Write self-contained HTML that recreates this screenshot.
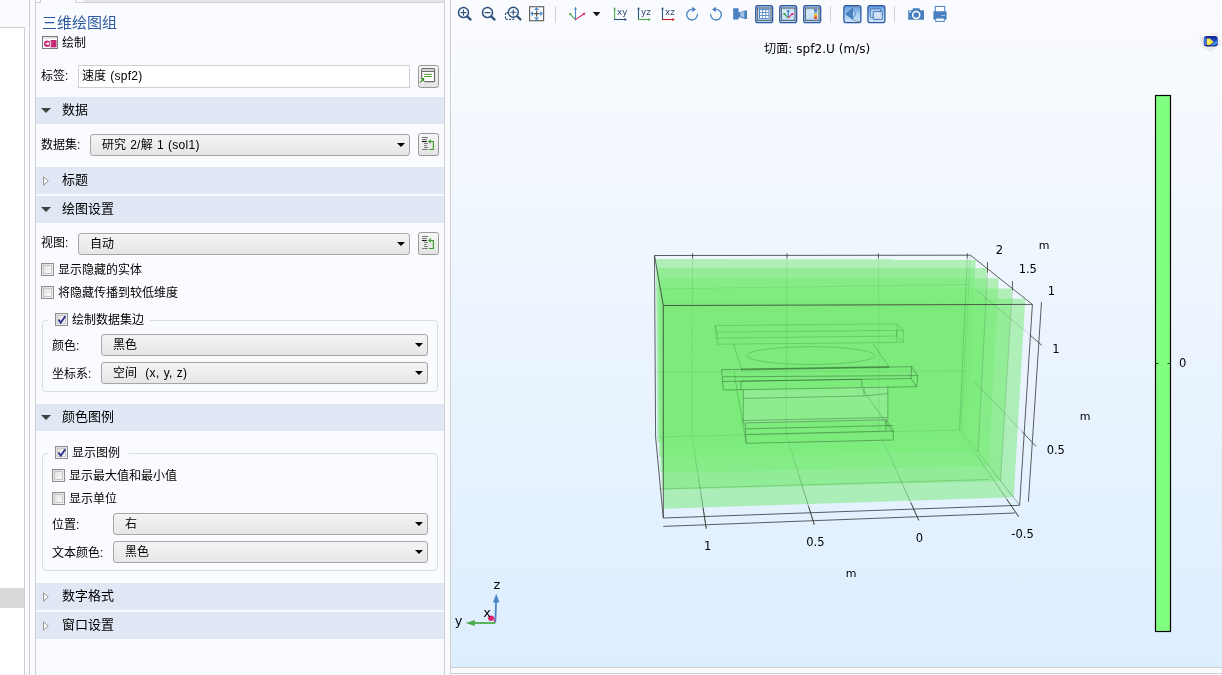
<!DOCTYPE html>
<html lang="zh-CN">
<head>
<meta charset="utf-8">
<title>三维绘图组</title>
<style>
*{box-sizing:border-box;margin:0;padding:0}
html,body{width:1222px;height:675px;overflow:hidden;background:#fafbfe}
body{position:relative;font-family:"Liberation Sans","Noto Sans CJK SC",sans-serif;font-size:12px;color:#000}
.abs{position:absolute}
.t{position:absolute;white-space:nowrap;line-height:16px;height:16px;font-size:12px;color:#000}
.hd{position:absolute;left:36px;width:408px;height:27px;background:#dfe8f4}
.hd span{position:absolute;left:26px;top:4px;font-size:13px;line-height:18px;white-space:nowrap}
.tri-d{position:absolute;left:5px;top:11px;width:0;height:0;border-left:5px solid transparent;border-right:5px solid transparent;border-top:5.500px solid #404040}
.tri-r{position:absolute;left:7px;top:8.500px;width:6px;height:10px}
.combo{position:absolute;height:22px;border:1px solid #a6a6a6;border-radius:3px;background:linear-gradient(#f4f4f4,#e6e6e6)}
.combo>span{position:absolute;top:2px;font-size:12px;line-height:16px;white-space:nowrap}
.combo i{position:absolute;right:4.500px;top:8px;width:0;height:0;border-left:4px solid transparent;border-right:4px solid transparent;border-top:4.500px solid #000}
.inp{position:absolute;border:1px solid #d0d0d0;background:#fff}
.btn{position:absolute;width:21px;height:22px;border:1px solid #999;border-radius:2.500px;background:linear-gradient(#f6f6f6,#e4e4e4)}
.cb{position:absolute;width:13px;height:13px;border:1px solid #8e8f8f;background:linear-gradient(135deg,#dcdcdc,#f6f6f6)}
.cb b{position:absolute;left:1px;top:1px;width:9px;height:9px;border:1px solid #c8c8c8;background:linear-gradient(135deg,#e2e2e2,#fbfbfb)}
.grp{position:absolute;left:42px;width:396px;border:1px solid #d8dee4;border-radius:4px}
.l{letter-spacing:.3px;word-spacing:.5px}
.gl{font-family:"DejaVu Sans","Liberation Sans",sans-serif}
</style>
</head>
<body>
<!-- far-left strip -->
<div class="abs" style="left:0;top:27px;width:25px;height:660px;background:#fff;border-top:1px solid #cfcfcf;border-right:1px solid #cfcfcf"></div>
<div class="abs" style="left:0;top:588px;width:24px;height:20px;background:#d9d9d9"></div>
<div class="abs" style="left:29px;top:0;width:1px;height:675px;background:#cfcfcf"></div>
<div class="abs" style="left:35px;top:0;width:1px;height:675px;background:#cfcfcf"></div>
<div class="abs" style="left:35px;top:0;width:6px;height:3px;border-right:1px solid #cfcfcf;border-bottom:1px solid #cfcfcf"></div>
<div class="abs" style="left:75px;top:0;width:369px;height:3px;background:#e6e6e6;border-bottom:1px solid #d2d2d2;border-left:1px solid #d2d2d2"></div>
<div class="abs" style="left:76px;top:0;width:8px;height:2px;background:#fafbfe"></div>
<div class="abs" style="left:444px;top:0;width:1px;height:675px;background:#cfcfcf"></div>
<div class="abs" style="left:450px;top:0;width:1px;height:675px;background:#cfcfcf"></div>

<!-- settings panel -->
<div id="settings" style="will-change:transform">
<div class="t" style="left:42px;top:13px;font-size:15px;line-height:20px;height:20px;color:#2d5aa0">三维绘图组</div>
<svg class="abs" style="left:42px;top:36px" width="17" height="13" viewBox="0 0 17 13"><rect x=".5" y=".5" width="15" height="12" fill="#fff" stroke="#7a7a7a"/><rect x="1" y="1" width="14" height="1.800" fill="#e4e4e4"/><rect x="8.300" y="4" width="6.200" height="7.400" fill="#c42a78"/><circle cx="5.200" cy="7.700" r="4.100" fill="#fff"/><circle cx="5.200" cy="7.700" r="3.300" fill="#c42a78"/><path d="M3.300 7.700h3.200M5.500 6.200l1.500 1.500-1.500 1.500" stroke="#fff" stroke-width="1.100" fill="none"/></svg>
<div class="t" style="left:62px;top:35px">绘制</div>

<div class="t" style="left:41px;top:68px">标签:</div>
<div class="inp" style="left:78px;top:65px;width:332px;height:23px"><span class="t" style="left:3px;top:2px">速度<span class="l"> (spf2)</span></span></div>
<div class="btn" style="left:418px;top:65px;height:23px"></div><svg class="abs" style="left:418px;top:65px" width="21" height="23" viewBox="418 65 21 23"><rect x="421.700" y="68.700" width="12.800" height="13" rx="1" fill="#fff" stroke="#6e6e6e" stroke-width="1.200"/><rect x="422.300" y="69.300" width="11.600" height="1.900" fill="#d4d4d4"/><path d="M421.700 71.500h12.800" stroke="#6e6e6e" stroke-width="1"/><path d="M424.100 74.400h7.800M424.100 76.500h7.800" stroke="#4a9a2a" stroke-width="1"/><rect x="419.800" y="78" width="4.600" height="5.500" fill="#efefef"/><path d="M420.300 78h3.900v3.900l-1.300-1.300-2.200 2.500-1-.9 2.200-2.500z" fill="#3f932c"/></svg>

<div class="hd" style="top:97px"><i class="tri-d"></i><span>数据</span></div>
<div class="t" style="left:41px;top:137px">数据集:</div>
<div class="combo" style="left:90px;top:134px;width:320px"><span style="left:11px">研究<span class="l"> 2/</span>解<span class="l"> 1 (sol1)</span></span><i></i></div>
<div class="btn" style="left:418px;top:133px;height:23px"></div><svg class="abs" style="left:418px;top:133px" width="21" height="23" viewBox="418 133 21 23"><path d="M422.100 137.5h5.800M422.100 139.5h4.700M424.100 143.5h3.800M424.100 145.5h2.700M424.100 147.5h3.800M422.100 149.5h5.800" stroke="#777" stroke-width="1"/><path d="M421.900 141.5h4.900" stroke="#111" stroke-width="1.100"/><path d="M429 149.5h4.400V141.5h-3" stroke="#3f9a32" stroke-width="1.200" fill="none"/><path d="M428 141.5l2.900-2.400v4.800z" fill="#3f9a32"/></svg>

<div class="hd" style="top:167px"><svg class="tri-r" viewBox="0 0 6 10"><path d="M.5.8v8.4L5.3 5z" fill="#fff" stroke="#8a8a8a" stroke-width=".9"/></svg><span>标题</span></div>
<div class="hd" style="top:196px"><i class="tri-d"></i><span>绘图设置</span></div>

<div class="t" style="left:41px;top:235px">视图:</div>
<div class="combo" style="left:78px;top:233px;width:332px"><span style="left:11px">自动</span><i></i></div>
<div class="btn" style="left:418px;top:232px;height:23px"></div><svg class="abs" style="left:418px;top:232px" width="21" height="23" viewBox="418 232 21 23"><path d="M422.100 236.5h5.800M422.100 238.5h4.700M424.100 242.5h3.800M424.100 244.5h2.700M424.100 246.5h3.800M422.100 248.5h5.800" stroke="#777" stroke-width="1"/><path d="M421.900 240.5h4.900" stroke="#111" stroke-width="1.100"/><path d="M429 248.5h4.400V240.5h-3" stroke="#3f9a32" stroke-width="1.200" fill="none"/><path d="M428 240.5l2.900-2.400v4.800z" fill="#3f9a32"/></svg>

<div class="cb" style="left:41px;top:263px"><b></b></div>
<div class="t" style="left:58px;top:262px">显示隐藏的实体</div>
<div class="cb" style="left:41px;top:286px"><b></b></div>
<div class="t" style="left:58px;top:285px">将隐藏传播到较低维度</div>

<div class="grp" style="top:320px;height:72px"></div>
<div class="abs" style="left:48px;top:312px;width:102px;height:16px;background:#fafbfe"></div>
<div class="cb chk" style="left:55px;top:313px"><b></b><svg class="abs" style="left:1px;top:1px" width="10" height="10" viewBox="0 0 10 10"><path d="M1.5 4.5l2.2 3.2L8.3 1.2" stroke="#2b2f8c" stroke-width="1.9" fill="none"/></svg></div>
<div class="t" style="left:72px;top:312px">绘制数据集边</div>
<div class="t" style="left:52px;top:338px">颜色:</div>
<div class="combo" style="left:101px;top:334px;width:327px"><span style="left:11px">黑色</span><i></i></div>
<div class="t" style="left:52px;top:366px">坐标系:</div>
<div class="combo" style="left:101px;top:362px;width:327px"><span style="left:11px">空间<span class="l">&nbsp; (x, y, z)</span></span><i></i></div>

<div class="hd" style="top:404px"><i class="tri-d"></i><span>颜色图例</span></div>

<div class="grp" style="top:453px;height:118px"></div>
<div class="abs" style="left:48px;top:445px;width:81px;height:16px;background:#fafbfe"></div>
<div class="cb chk" style="left:55px;top:446px"><b></b><svg class="abs" style="left:1px;top:1px" width="10" height="10" viewBox="0 0 10 10"><path d="M1.5 4.5l2.2 3.2L8.3 1.2" stroke="#2b2f8c" stroke-width="1.9" fill="none"/></svg></div>
<div class="t" style="left:72px;top:445px">显示图例</div>
<div class="cb" style="left:52px;top:469px"><b></b></div>
<div class="t" style="left:69px;top:468px">显示最大值和最小值</div>
<div class="cb" style="left:52px;top:492px"><b></b></div>
<div class="t" style="left:69px;top:491px">显示单位</div>
<div class="t" style="left:52px;top:517px">位置:</div>
<div class="combo" style="left:113px;top:513px;width:315px"><span style="left:11px">右</span><i></i></div>
<div class="t" style="left:52px;top:545px">文本颜色:</div>
<div class="combo" style="left:113px;top:541px;width:315px"><span style="left:11px">黑色</span><i></i></div>

<div class="hd" style="top:583px"><svg class="tri-r" viewBox="0 0 6 10"><path d="M.5.8v8.4L5.3 5z" fill="#fff" stroke="#8a8a8a" stroke-width=".9"/></svg><span>数字格式</span></div>
<div class="hd" style="top:612px"><svg class="tri-r" viewBox="0 0 6 10"><path d="M.5.8v8.4L5.3 5z" fill="#fff" stroke="#8a8a8a" stroke-width=".9"/></svg><span>窗口设置</span></div>
</div>

<!-- graphics window -->
<div id="gfx" class="abs" style="left:451px;top:0;width:771px;height:668px;background:linear-gradient(#fafbfe 0%,#ddeeff 100%);border-bottom:1px solid #cfcfcf"></div>
<div class="abs" style="left:451px;top:673px;width:771px;height:1px;background:#cfcfcf"></div>
<svg class="abs" style="left:0;top:0;will-change:transform" width="1222" height="30" viewBox="0 0 1222 30">
<defs>
<linearGradient id="bg1" x1="0" y1="0" x2="0" y2="1"><stop offset="0" stop-color="#9cc6ee"/><stop offset=".35" stop-color="#d6ebfc"/><stop offset="1" stop-color="#b6dbf8"/></linearGradient>
<linearGradient id="cbar" x1="0" y1="0" x2="0" y2="1"><stop offset="0" stop-color="#3060c0"/><stop offset=".35" stop-color="#80b0e0"/><stop offset=".55" stop-color="#f0d020"/><stop offset=".75" stop-color="#f08020"/><stop offset="1" stop-color="#e02050"/></linearGradient>
<linearGradient id="bg2" x1="0" y1="0" x2="0" y2="1"><stop offset="0" stop-color="#5f98dc"/><stop offset=".5" stop-color="#a6cef2"/><stop offset="1" stop-color="#cde5fa"/></linearGradient>
</defs>
<!-- zoom in -->
<g fill="none" stroke="#2b507c" stroke-linecap="round">
<circle cx="463.5" cy="12.6" r="5" stroke-width="1.5"/><path d="M467.4 16.6L470.6 19.6" stroke-width="2.2"/><path d="M461 12.6h5M463.5 10.1v5" stroke-width="1.1"/>
<circle cx="487.5" cy="12.6" r="5" stroke-width="1.5"/><path d="M491.4 16.6L494.6 19.6" stroke-width="2.2"/><path d="M485 12.6h5" stroke-width="1.1"/>
<circle cx="513.3" cy="12.3" r="5" stroke-width="1.5"/><path d="M517.2 16.3L520.4 19.4" stroke-width="2.2"/><path d="M510.8 12.3h5M513.3 9.8v5" stroke-width="1.1"/>
<path d="M508.3 12.6H505.5V19.4H513.6V17.4" stroke-width="1.2" stroke-dasharray="2 1.3" stroke-linecap="butt"/>
</g>
<!-- zoom extents -->
<rect x="529.6" y="6.7" width="14" height="14" fill="#fdfdff" stroke="#666" stroke-width="1.2"/>
<path d="M533.4 13.6h6.400M536.6 10.400v6.400" stroke="#555" stroke-width="1.300"/>
<path d="M536.6 7l2.500 3h-5zM536.6 20.400l2.500-3h-5zM530.200 13.600l2.800-2.700v5.400zM543 13.600l-2.800-2.700v5.400z" fill="#4a90d6"/>
<!-- separators -->
<path d="M555.5 6v17M830.5 6v17M894.5 6v17" stroke="#d2d2d2" stroke-width="1"/>
<!-- triad -->
<g stroke-width="1.100" fill="none" stroke-linecap="round">
<path d="M575.5 19.600V8.400" stroke="#4a86c8"/><path d="M575.5 19.600L570.200 14.200" stroke="#4aaa4a"/><path d="M575.5 19.600L584 13.800" stroke="#e0206a"/>
</g>
<path d="M575.5 6.800l1.500 2.600h-3z" fill="#4a86c8"/><path d="M569 13l2.800.5-2.200 2.200z" fill="#4aaa4a"/><path d="M585.400 12.800l-1.200 2.700-1.700-2.400z" fill="#e0206a"/>
<path d="M592.8 12h7.6l-3.8 4.2z" fill="#111"/>
<!-- xy yz xz -->
<path d="M614.6 19.500V8.600" stroke="#4aaa4a" stroke-width="1.100"/><path d="M614.6 6.900l1.400 2.500h-2.800z" fill="#4aaa4a"/><path d="M614.1 19.500h11" stroke="#2b507c" stroke-width="1.100"/><path d="M627.0 19.500l-2.500 1.400v-2.800z" fill="#2b507c"/>
<path d="M638.5 19.500V8.600" stroke="#2b507c" stroke-width="1.100"/><path d="M638.5 6.900l1.400 2.500h-2.800z" fill="#2b507c"/><path d="M638.0 19.500h11" stroke="#4aaa4a" stroke-width="1.100"/><path d="M650.9 19.500l-2.500 1.400v-2.800z" fill="#4aaa4a"/>
<path d="M662.5 19.500V8.600" stroke="#2b507c" stroke-width="1.100"/><path d="M662.5 6.900l1.400 2.500h-2.800z" fill="#2b507c"/><path d="M662.0 19.500h11" stroke="#c4202c" stroke-width="1.100"/><path d="M674.9 19.500l-2.500 1.400v-2.800z" fill="#c4202c"/>
<g font-family="'DejaVu Sans','Liberation Sans',sans-serif" font-size="8.800" fill="#2f4d72">
<text x="617" y="14.900">xy</text><text x="641" y="14.900">yz</text><text x="665" y="14.600">xz</text>
</g>
<!-- rotate cw / ccw -->
<g fill="none" stroke="#4a80c0" stroke-width="1.300">
<path d="M697.300 13.800A5.300 5.300 0 1 1 692.300 9.400"/>
<path d="M710.800 13.800A5.300 5.300 0 1 0 715.800 9.400"/>
</g>
<path d="M692.200 6.800l3.900 2.650-3.900 2.650z" fill="#4a80c0"/>
<path d="M715.900 6.800l-3.900 2.650 3.900 2.650z" fill="#4a80c0"/>
<!-- view camera -->
<path d="M733.200 8.200h5.400v4.300l6.200-2.100h2.200v8.600h-2.200l-6.200-2.100v2.700h-5.400z" fill="#4a80c0"/>
<path d="M740.300 12.600l4-1.300v6.600l-4-1.300z" fill="#a4c0e4"/>
<!-- toggle buttons -->
<g>
<rect x="755.700" y="5.700" width="17" height="17" rx="2.200" fill="url(#bg1)" stroke="#2a55a0" stroke-width="1.250"/>
<rect x="757.400" y="8" width="13.600" height="12.400" fill="none" stroke="#606468" stroke-width="1.100"/>
<rect x="759" y="9.200" width="10.400" height="9.600" fill="#4a80c0"/>
<g fill="#fff"><rect x="760" y="10.100" width="2.300" height="2.100"/><rect x="763.100" y="10.100" width="2.300" height="2.100"/><rect x="766.200" y="10.100" width="2.300" height="2.100"/><rect x="760" y="13" width="2.300" height="2.100"/><rect x="763.100" y="13" width="2.300" height="2.100"/><rect x="766.200" y="13" width="2.300" height="2.100"/><rect x="760" y="15.900" width="2.300" height="2.100"/><rect x="763.100" y="15.900" width="2.300" height="2.100"/><rect x="766.200" y="15.900" width="2.300" height="2.100"/></g>

<rect x="779.700" y="5.700" width="17" height="17" rx="2.200" fill="url(#bg1)" stroke="#2a55a0" stroke-width="1.250"/>
<rect x="781.400" y="8" width="13.600" height="12.400" fill="none" stroke="#606468" stroke-width="1.100"/>
<path d="M788.200 17.800V10.400" stroke="#3a70b8" stroke-width="1.100"/><path d="M787 11.800l1.200-1.800 1.200 1.800" stroke="#3a70b8" stroke-width="1" fill="none"/>
<path d="M788.200 17.800l-3.600-3.600" stroke="#3aa03a" stroke-width="1.100"/><rect x="783.400" y="13" width="2" height="2" fill="#3aa03a"/>
<path d="M788.200 17.800l4-3.600" stroke="#e0206a" stroke-width="1.100"/><rect x="791.400" y="13" width="2" height="2" fill="#e0206a"/>

<rect x="803.700" y="5.700" width="17" height="17" rx="2.200" fill="url(#bg1)" stroke="#2a55a0" stroke-width="1.250"/>
<rect x="805.400" y="8" width="13.600" height="12.400" fill="none" stroke="#606468" stroke-width="1.100"/>
<rect x="814.100" y="9.100" width="2.900" height="9.800" fill="url(#cbar)"/>

<rect x="843.900" y="5.700" width="17" height="17" rx="2.200" fill="url(#bg2)" stroke="#2a55a0" stroke-width="1.250"/>
<path d="M853.200 7.400L860 5.900M853.200 20L860 22" stroke="#8a8a8a" stroke-width=".8"/>
<path d="M845 13.900L853.300 7.300V20.300z" fill="#4a80c0"/>
<path d="M853.300 10.800a3.400 3.400 0 0 1 0 6.200" fill="#d0e6fa" stroke="#4a80c0" stroke-width="1"/>

<rect x="867.900" y="5.700" width="17" height="17" rx="2.200" fill="url(#bg2)" stroke="#2a55a0" stroke-width="1.250"/>
<rect x="870.300" y="8.800" width="10.400" height="8.600" rx=".8" fill="#c4ddf4" fill-opacity=".6" stroke="#4a78b8" stroke-width="1"/>
<rect x="873.200" y="11.600" width="9.200" height="7.800" rx=".6" fill="#d8e4f4" fill-opacity=".85" stroke="#4a78b8" stroke-width="1"/>
</g>
<!-- camera -->
<path d="M908.200 10.200h4l.8-2h6.400l.8 2h3.800v9.600h-15.800z" fill="#4a80c0"/>
<circle cx="916.200" cy="14.900" r="3.500" fill="#4a80c0" stroke="#fff" stroke-width="1.500"/>
<rect x="909.300" y="10.900" width="1.600" height="1.600" fill="#fff"/>
<!-- printer -->
<rect x="935.300" y="6.400" width="9.400" height="6" fill="#fdfdff" stroke="#4a80c0" stroke-width="1"/>
<path d="M933.400 12.200a1 1 0 0 1 1-1h11.200a1 1 0 0 1 1 1v7.200h-13.200z" fill="#4a80c0"/>
<rect x="935.700" y="18" width="8.600" height="3.400" fill="#fdfdff" stroke="#4a80c0" stroke-width="1"/>
<rect x="941.800" y="15" width="1" height="1" fill="#fff"/><rect x="943.600" y="15" width="1" height="1" fill="#fff"/>
</svg>

<!--PLOT-BEGIN-->
<svg class="abs" style="left:0;top:0;will-change:transform" width="1222" height="675" viewBox="0 0 1222 675">
<g fill="#78eb78" fill-opacity=".53">
<path d="M655.8 259.0L975.7 259.2L967.7 439.0L657.5 442.2z"/>
<path d="M657.6 268.0L987.0 268.1L977.7 452.0L659.0 456.7z"/>
<path d="M659.4 278.4L998.7 278.2L988.7 466.0L660.5 472.7z"/>
<path d="M661.2 289.0L1012.0 288.4L1000.7 481.0L662.0 490.0z"/>
<path d="M663.0 299.5L1025.3 298.6L1013.7 497.3L663.5 508.7z"/>
</g>
<path d="M743.5 389.5L887.8 386.500L887.8 421L743.5 423.500z" fill="#c8f8cc" fill-opacity=".22"/>
<path d="M692.6 255.4L692.0 436.2M787.0 255.4L786.0 434.0M878.4 255.4L879.0 432.0M970.4 255.2L961.0 430.0M655.6 437.0L961.0 430.0M655.5 372.0L967.0 371.0M655.0 289.0L969.0 284.5" fill="none" stroke="#2a5a2a" stroke-opacity=".11" stroke-width="1"/>
<path d="" fill="none" stroke="#2a4a2a" stroke-opacity=".36" stroke-width="1"/>
<defs><linearGradient id="flg" gradientUnits="userSpaceOnUse" x1="0" y1="432" x2="0" y2="510"><stop offset="0" stop-color="#2a4a2a" stop-opacity=".06"/><stop offset=".5" stop-color="#2a4a2a" stop-opacity=".2"/><stop offset="1" stop-color="#2a4a2a" stop-opacity=".5"/></linearGradient></defs>
<path d="M692.0 436.2L706.3 528.7M786.0 434.0L814.3 524.7M879.0 432.0L918.8 520.4M959.5 430.0L1018.7 516.7M961.0 430.0L1019.0 504.5" fill="none" stroke="url(#flg)" stroke-width="1"/>
<path d="M659.0 489.0L989.0 479.5M973.0 380.0L1022.0 431.5M975.0 289.0L1030.0 335.0M987.5 272.0L978.0 452.0M1012.4 290.0L1000.5 481.0M967.3 258.0L959.5 430.0" fill="none" stroke="#2a4a2a" stroke-opacity=".2" stroke-width="1"/>
<path d="M715.2 325.600L897.300 323.800L903.300 330.400L903.300 342.200L896.800 336L716 338.200zM717.300 332.200L896.700 330.400L903.300 330.400M896.800 336L897.300 323.800M717.300 332.200L717.300 344.200L896.700 342.500L903.300 342.200M896.700 330.400L896.700 342.500M715.200 325.600L717.300 332.200" fill="none" stroke="#2f6a2f" stroke-opacity=".24" stroke-width="1"/>
<ellipse cx="810.700" cy="355.600" rx="64" ry="8.900" fill="none" stroke="#2f6a2f" stroke-opacity=".28" stroke-width="1"/>
<path d="M741 369.500L889 367.100" stroke="#3f8a3f" stroke-opacity=".6" stroke-width="2" fill="none"/>
<path d="M733.300 343.800L742.200 370M873.300 344.400L889 366.700M862.200 388.900L892.200 431.800M734 372L746.200 443.300" fill="none" stroke="#2f6a2f" stroke-opacity=".30" stroke-width="1"/>
<path d="M721.600 369.600L911.600 366.700L917.800 375.600L916.700 386.700L723.300 390L721.600 369.600M723 376.800L917.800 375.600M911.600 366.700L911 378.500L916.700 386.700M722.500 381.500L911 378.500M741 381.200L862 379.200L862 388M741 381.200L741 390" fill="none" stroke="#2c5c2c" stroke-opacity=".46" stroke-width="1"/>
<path d="M743.300 390L743.300 423.300M887.800 386.700L887.800 421M743.300 398.400L864 396L887.800 393.500M743.300 420.500L887.800 417.500M864 396L864 388.500" fill="none" stroke="#2c5c2c" stroke-opacity=".40" stroke-width="1"/>
<path d="M745 422.900L886 419.800L893.300 431L893.300 440L746.200 443.300L745 422.900M745.500 428.800L893.300 425.500M746 434.500L893.300 431M886 419.800L886 430" fill="none" stroke="#2c5c2c" stroke-opacity=".46" stroke-width="1"/>
<path d="M654.5 255.5L970.4 255.2M654.5 255.5L663.3 305.5M970.4 255.2L1032.4 304.4M663.3 305.5L1032.4 304.4M663.3 305.5L663.3 518.0M1032.4 304.4L1019.6 505.3M663.3 518.0L1019.6 505.3M654.5 255.5L655.6 437.0M655.6 437.0L663.3 518.0M692.6 253.3L692.6 258.5M787.0 253.3L787.0 258.5M878.4 253.3L878.4 258.5M967.3 253.3L967.3 258.5M987.5 262.0L987.5 272.7M1012.4 281.0L1012.4 290.0M1041.5 302.0L1028.4 501.7M1030.0 335.0L1042.0 345.5M1022.0 431.5L1036.0 446.4M663.3 526.4L1015.3 513.0M703.1 508.0L706.3 528.7M808.6 506.5L814.3 524.7M911.0 503.0L918.8 520.4M1006.6 499.0L1018.7 516.7" fill="none" stroke="#3c3c3c" stroke-opacity=".82" stroke-width="1"/>
<g font-family="'DejaVu Sans','Liberation Sans',sans-serif" fill="#000">
<text x="999.4" y="254.2" font-size="11.5" text-anchor="middle">2</text>
<text x="1027.8" y="272.6" font-size="11.5" text-anchor="middle">1.5</text>
<text x="1051.5" y="294.9" font-size="11.5" text-anchor="middle">1</text>
<text x="1055.8" y="352.7" font-size="11.5" text-anchor="middle">1</text>
<text x="1055.8" y="453.5" font-size="11.5" text-anchor="middle">0.5</text>
<text x="707.6" y="550" font-size="11.5" text-anchor="middle">1</text>
<text x="815.4" y="545.9" font-size="11.5" text-anchor="middle">0.5</text>
<text x="919.5" y="542.2" font-size="11.5" text-anchor="middle">0</text>
<text x="1022.6" y="537.6" font-size="11.5" text-anchor="middle">-0.5</text>
<text x="1044" y="249" font-size="11" text-anchor="middle">m</text>
<text x="1085" y="420" font-size="11" text-anchor="middle">m</text>
<text x="851" y="577" font-size="11" text-anchor="middle">m</text>
<text x="1182.6" y="367.2" font-size="11.5" text-anchor="middle">0</text>
</g>
<text x="817.2" y="53" font-size="12.1" text-anchor="middle" font-family="'DejaVu Sans','Noto Sans CJK SC',sans-serif" fill="#000">切面: spf2.U (m/s)</text>
<rect x="1155.500" y="95.500" width="15" height="536" fill="#80ff80" stroke="#000" stroke-width="1.200"/>
<path d="M1156 363.500h2.500M1167.500 363.500h3" stroke="#1a501a" stroke-width="1"/>
<path d="M495.300 622.500L496.100 601" stroke="#4a86c8" stroke-width="1.800"/><path d="M496.300 593.800l3.200 8.600h-6.600z" fill="#4a86c8"/>
<path d="M495.300 623L474 623" stroke="#4aaa4a" stroke-width="1.800"/><path d="M465.800 623l9-3v6z" fill="#4aaa4a"/>
<circle cx="490.800" cy="618.200" r="2.700" fill="#e0206a"/><path d="M493 616.500l1.800 5.200" stroke="#e0206a" stroke-width="1.200"/>
<g font-family="'DejaVu Sans','Liberation Sans',sans-serif" font-size="13" fill="#000" text-anchor="middle"><text x="497" y="588.500">z</text><text x="458.500" y="624.500">y</text><text x="487" y="616.500">x</text></g>
<defs><linearGradient id="lg" x1="0" y1="0" x2="0" y2="1"><stop offset="0" stop-color="#14208c"/><stop offset=".5" stop-color="#2450cc"/><stop offset="1" stop-color="#0e1a7c"/></linearGradient></defs>
<path d="M1199.300 37.400L1217.800 31.900L1221.500 44.400L1210.400 51.900L1203 48.100z" fill="#e4e4e8" opacity=".75"/><rect x="1202.900" y="35.100" width="15.700" height="12.200" rx="3.800" fill="#fcfcf4"/><rect x="1203.700" y="35.900" width="14.100" height="10.600" rx="3" fill="url(#lg)"/><rect x="1204.200" y="37.500" width="2" height="7.500" rx="1" fill="#3a74ec"/><path d="M1210.500 45.200L1216.800 40.500L1217.200 43.800L1214.500 45.600z" fill="#4aa2f2" opacity=".85"/><path d="M1206.700 38.600h3.300l3.700 3.300-3.700 3.200h-3.300z" fill="#f2e044"/><path d="M1207.500 40h2.500v3.500h-2.500z" fill="#fff680" opacity=".7"/>
</svg>
<!--PLOT-END-->
</body>
</html>
